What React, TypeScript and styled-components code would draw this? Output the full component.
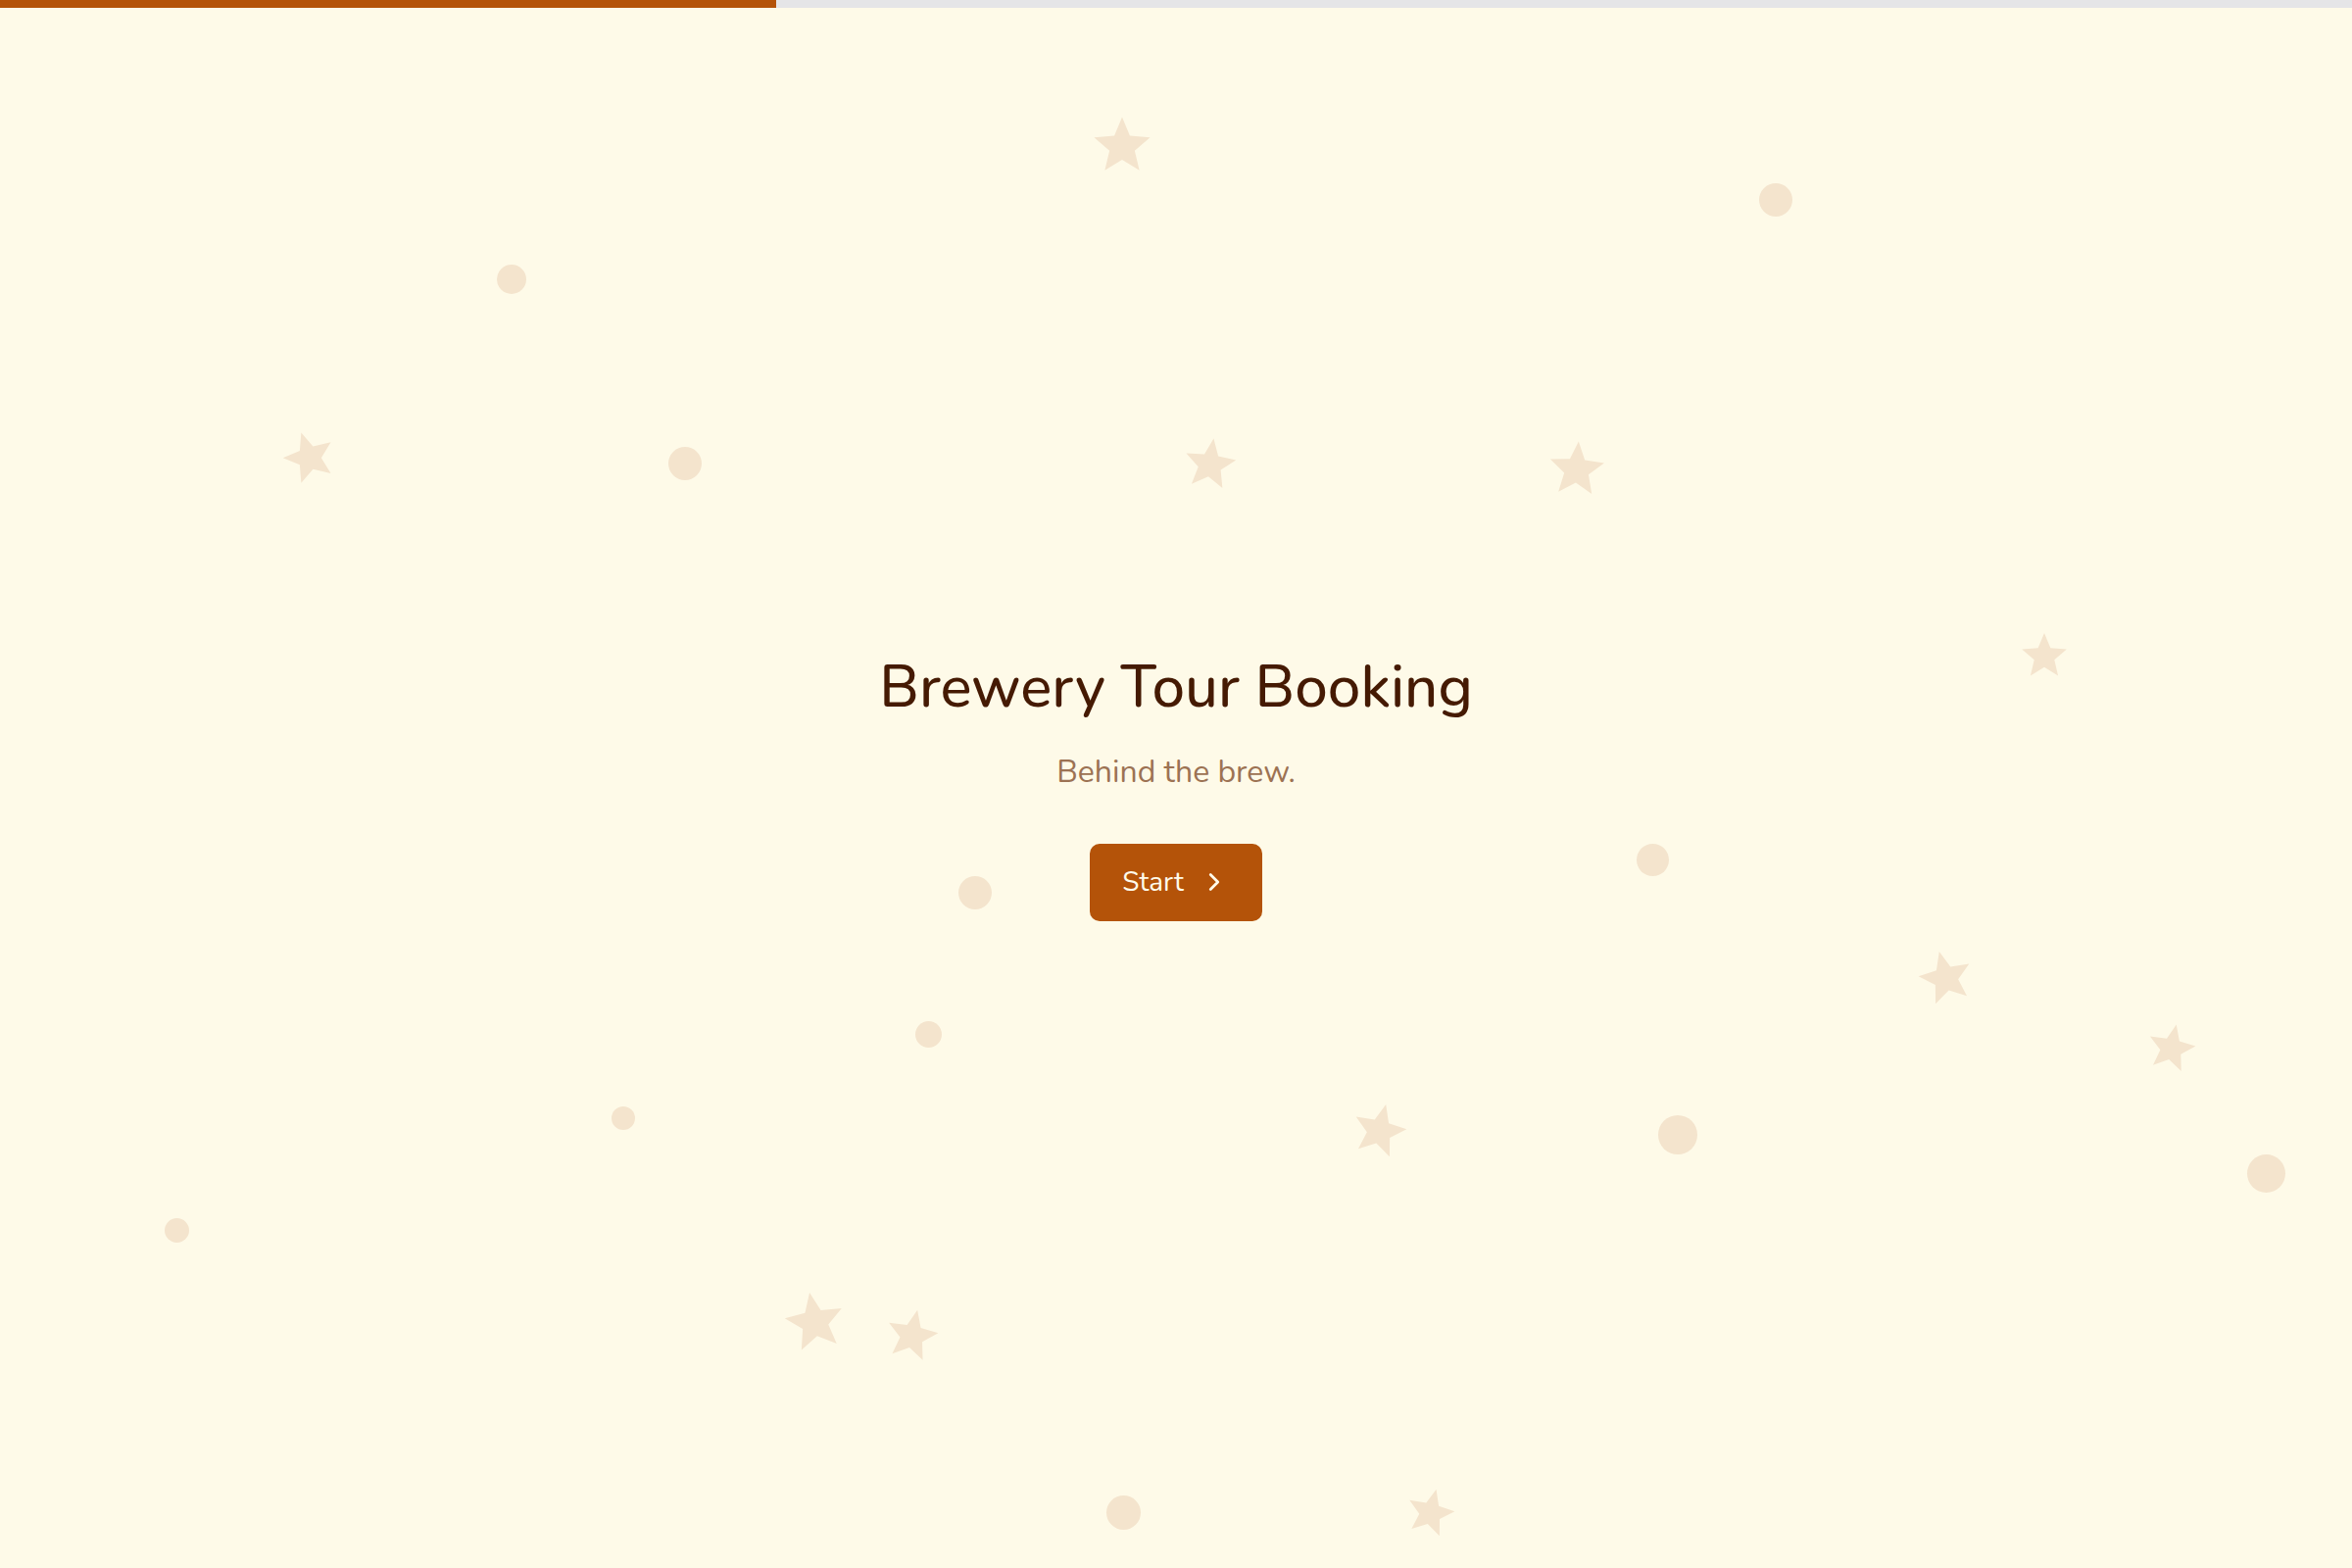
import React from 'react';
import styled, { createGlobalStyle } from 'styled-components';

const GlobalStyle = createGlobalStyle`
  html, body {
    margin: 0;
    padding: 0;
    background: #fefae8;
  }
  body {
    font-family: 'Nunito', 'Lato', 'Noto Sans', sans-serif;
  }
  * {
    box-sizing: border-box;
  }
`;

const PageContainer = styled.div`
  position: relative;
  min-height: 100vh;
  display: flex;
  flex-direction: column;
  background: #fefae8;
  overflow: hidden;
`;

const ProgressTrack = styled.div`
  height: 8px;
  width: 100%;
  background: #e5e5e7;
  position: relative;
  z-index: 2;
`;

const ProgressFill = styled.div`
  height: 100%;
  background: #b45309;
`;

const Backdrop = styled.div`
  position: absolute;
  inset: 0;
  pointer-events: none;
  z-index: 0;
`;

const Dot = styled.span<{ $x: number; $y: number; $d: number }>`
  position: absolute;
  left: ${(p) => p.$x - p.$d / 2}px;
  top: ${(p) => p.$y - p.$d / 2}px;
  width: ${(p) => p.$d}px;
  height: ${(p) => p.$d}px;
  border-radius: 50%;
  background: #f4e4cd;
`;

const StarMark = styled.svg<{ $x: number; $y: number; $s: number; $r: number }>`
  position: absolute;
  left: ${(p) => p.$x - p.$s / 2}px;
  top: ${(p) => p.$y - p.$s / 2}px;
  width: ${(p) => p.$s}px;
  height: ${(p) => p.$s}px;
  transform: rotate(${(p) => p.$r}deg);
  fill: #f4e4cd;
`;

const Hero = styled.main`
  position: relative;
  z-index: 1;
  flex: 1;
  display: flex;
  flex-direction: column;
  align-items: center;
  justify-content: center;
  text-align: center;
  padding-bottom: 4px;
`;

const Title = styled.h1`
  margin: 0;
  font-size: 60px;
  line-height: 1.25;
  font-weight: 500;
  color: #451a03;
`;

const Subtitle = styled.p`
  margin: 28px 0 0;
  font-size: 32px;
  line-height: 1.3;
  color: #9c7253;
`;

const StartButton = styled.button`
  margin-top: 52px;
  display: inline-flex;
  align-items: center;
  gap: 16px;
  height: 79px;
  padding: 0 34px 0 33px;
  border: none;
  border-radius: 10px;
  background: #b45309;
  color: #fffbeb;
  font-family: inherit;
  font-size: 28px;
  cursor: pointer;

  svg {
    width: 30px;
    height: 30px;
  }
`;

const starPoints = (() => {
  const pts: string[] = [];
  for (let i = 0; i < 10; i++) {
    const r = i % 2 === 0 ? 12 : 5.4;
    const a = (Math.PI / 5) * i - Math.PI / 2;
    pts.push(`${(12 + r * Math.cos(a)).toFixed(2)},${(13 + r * Math.sin(a)).toFixed(2)}`);
  }
  return pts.join(' ');
})();

const stars = [
  { x: 1145, y: 147, s: 60, r: 0 },
  { x: 315, y: 465, s: 54, r: -18 },
  { x: 1235, y: 472, s: 54, r: 8 },
  { x: 1609, y: 477, s: 58, r: 4 },
  { x: 2086, y: 668, s: 48, r: 0 },
  { x: 1985, y: 996, s: 56, r: -14 },
  { x: 2216, y: 1068, s: 50, r: 12 },
  { x: 1408, y: 1152, s: 56, r: 14 },
  { x: 831, y: 1347, s: 62, r: -10 },
  { x: 931, y: 1361, s: 54, r: 12 },
  { x: 1460, y: 1542, s: 50, r: 14 },
];

const dots = [
  { x: 1812, y: 204, d: 34 },
  { x: 522, y: 285, d: 30 },
  { x: 699, y: 473, d: 34 },
  { x: 995, y: 911, d: 34 },
  { x: 1686, y: 877, d: 33 },
  { x: 947, y: 1055, d: 27 },
  { x: 636, y: 1141, d: 24 },
  { x: 180, y: 1255, d: 25 },
  { x: 1712, y: 1158, d: 40 },
  { x: 2312, y: 1197, d: 39 },
  { x: 1146, y: 1543, d: 35 },
];

const ChevronRight = () => (
  <svg viewBox="0 0 24 24" fill="none" stroke="currentColor" strokeWidth={2.2} strokeLinecap="round" strokeLinejoin="round">
    <path d="m9 18 6-6-6-6" />
  </svg>
);

const App = () => {
  const progress = 33;

  return (
    <PageContainer>
      <GlobalStyle />
      <Backdrop>
        {stars.map((st, i) => (
          <StarMark key={`s${i}`} viewBox="0 0 24 24" $x={st.x} $y={st.y} $s={st.s} $r={st.r}>
            <polygon points={starPoints} />
          </StarMark>
        ))}
        {dots.map((d, i) => (
          <Dot key={`d${i}`} $x={d.x} $y={d.y} $d={d.d} />
        ))}
      </Backdrop>

      <ProgressTrack>
        <ProgressFill style={{ width: `${progress}%` }} />
      </ProgressTrack>

      <Hero>
        <Title>Brewery Tour Booking</Title>
        <Subtitle>Behind the brew.</Subtitle>
        <StartButton>
          Start
          <ChevronRight />
        </StartButton>
      </Hero>
    </PageContainer>
  );
};

export default App;
